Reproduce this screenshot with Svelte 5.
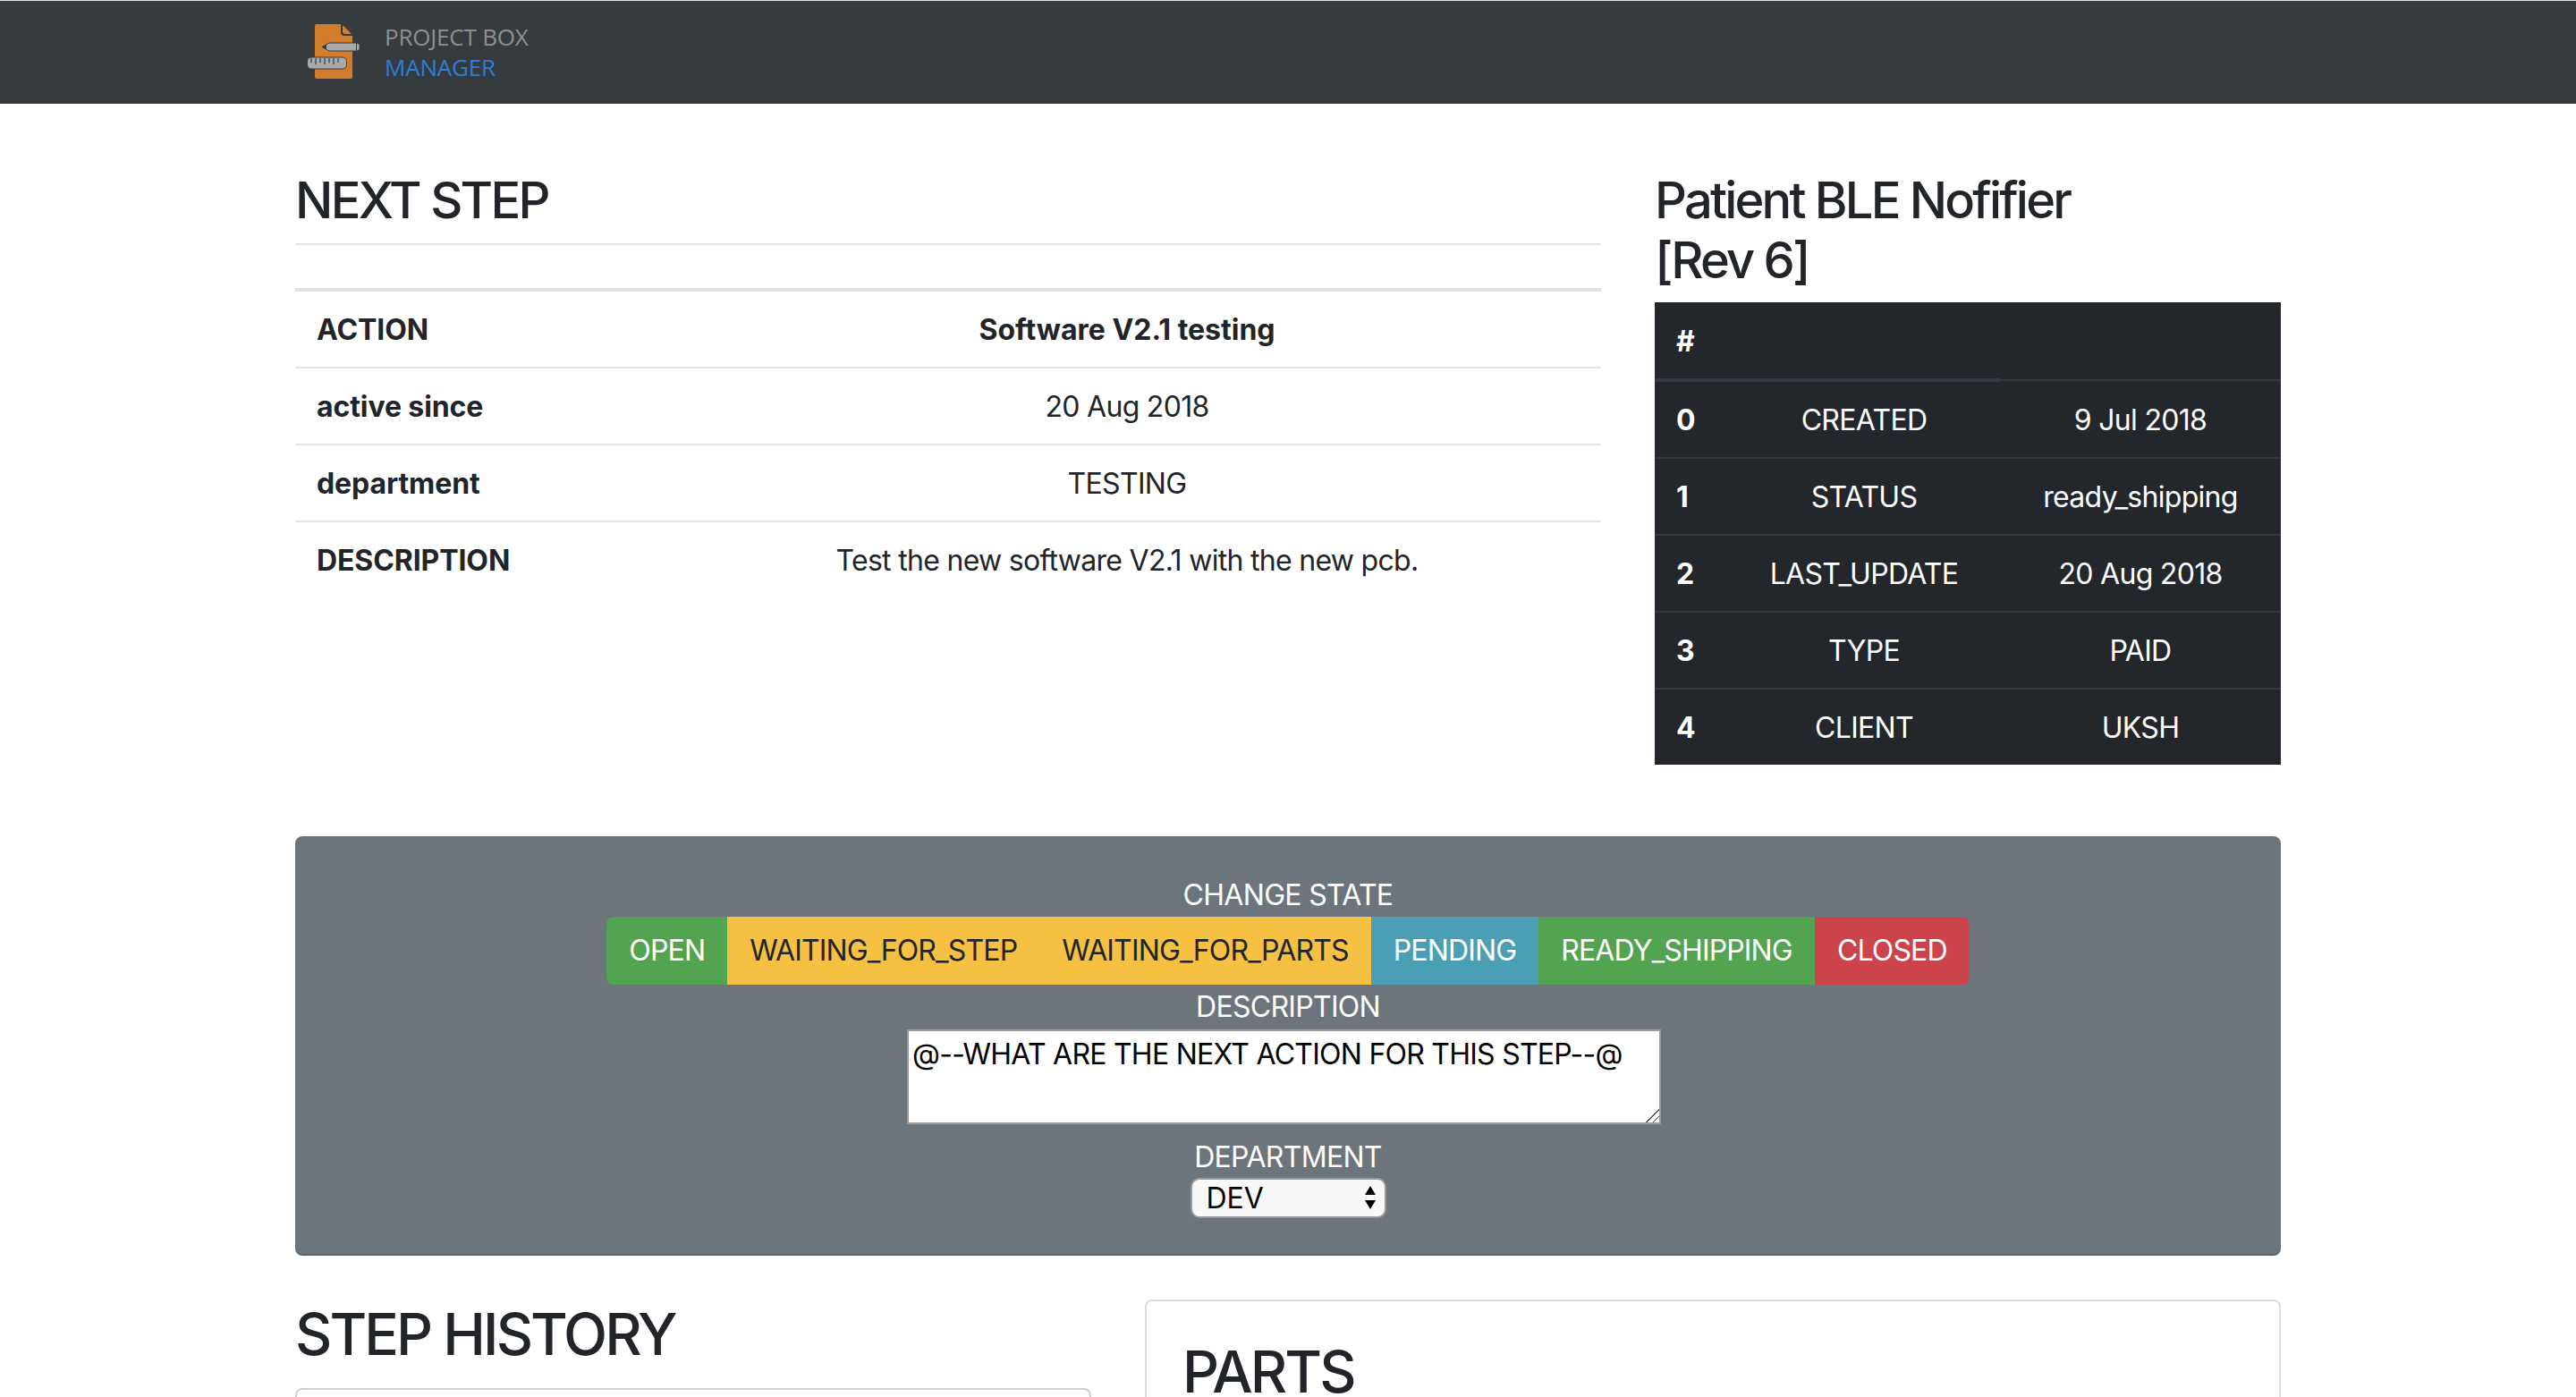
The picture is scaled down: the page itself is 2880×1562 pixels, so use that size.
<script>
    const nextStep = [
        { label: 'ACTION', value: 'Software V2.1 testing', strong: true },
        { label: 'active since', value: '20 Aug 2018' },
        { label: 'department', value: 'TESTING' },
        { label: 'DESCRIPTION', value: 'Test the new software V2.1 with the new pcb.' },
    ];

    const info = [
        ['CREATED', '9 Jul 2018'],
        ['STATUS', 'ready_shipping'],
        ['LAST_UPDATE', '20 Aug 2018'],
        ['TYPE', 'PAID'],
        ['CLIENT', 'UKSH'],
    ];

    const states = [
        { name: 'OPEN', kind: 'success' },
        { name: 'WAITING_FOR_STEP', kind: 'warning' },
        { name: 'WAITING_FOR_PARTS', kind: 'warning' },
        { name: 'PENDING', kind: 'info' },
        { name: 'READY_SHIPPING', kind: 'success' },
        { name: 'CLOSED', kind: 'danger' },
    ];

    const departments = ['DEV', 'TESTING', 'PRODUCTION'];
</script>

<div class="page">
    <nav class="navbar">
        <div class="brand">
            <svg class="logo" viewBox="0 0 60 61" width="60" height="61" aria-hidden="true">
                <path d="M11 0h27v9a4 4 0 0 0 4 4h9v46a2 2 0 0 1-2 2H11a2 2 0 0 1-2-2V2a2 2 0 0 1 2-2z" fill="#d17d2c" />
                <path d="M40 1l10 10h-7a3 3 0 0 1-3-3z" fill="#d17d2c" />
                <path d="M17 25.5l8-4.5h31l3 1.5v6l-3 1.5H25z" fill="#a9a9a9" stroke="#363b40" stroke-width="1" />
                <path d="M17 25.5l5-2.8v5.6z" fill="#363b40" />
                <path d="M55.5 21v9" stroke="#363b40" stroke-width="1" />
                <rect x="0.5" y="37" width="44" height="13" rx="4.5" fill="#a9a9a9" stroke="#363b40" stroke-width="1" />
                <path d="M5 38v5M10 38v7M15 38v5M20 38v7M25 38v5M30 38v7M35 38v5" stroke="#363b40" stroke-width="1.2" />
            </svg>
            <div class="brand-text">
                <span class="brand-top">PROJECT BOX</span>
                <span class="brand-bottom">MANAGER</span>
            </div>
        </div>
    </nav>

    <main class="container">
        <section class="top-row">
            <div>
                <h3>NEXT STEP</h3>
                <hr />
                <table class="table">
                    <tbody>
                        {#each nextStep as row}
                            <tr>
                                <th>{row.label}</th>
                                <td class:strong={row.strong}>{row.value}</td>
                            </tr>
                        {/each}
                    </tbody>
                </table>
            </div>
            <div>
                <h3 class="project-title">Patient BLE Nofifier<br />[Rev 6]</h3>
                <table class="table-dark">
                    <thead>
                        <tr>
                            <th>#</th>
                            <th></th>
                            <th></th>
                        </tr>
                    </thead>
                    <tbody>
                        {#each info as row, i}
                            <tr>
                                <th>{i}</th>
                                <td>{row[0]}</td>
                                <td>{row[1]}</td>
                            </tr>
                        {/each}
                    </tbody>
                </table>
            </div>
        </section>

        <section class="jumbotron">
            <span class="form-label">CHANGE STATE</span>
            <div class="btn-group">
                {#each states as s}
                    <button class="btn {s.kind}">{s.name}</button>
                {/each}
            </div>
            <span class="form-label">DESCRIPTION</span>
            <textarea value="@--WHAT ARE THE NEXT ACTION FOR THIS STEP--@"></textarea>
            <span class="form-label">DEPARTMENT</span>
            <div class="select-wrap">
                <select>
                    {#each departments as d}
                        <option>{d}</option>
                    {/each}
                </select>
                <svg class="arrows" viewBox="0 0 14 28" width="14" height="28" aria-hidden="true">
                    <path d="M7 1l6 10H1zM7 27L1 17h12z" fill="#000" />
                </svg>
            </div>
        </section>

        <section class="bottom-row">
            <div>
                <h2>STEP HISTORY</h2>
                <div class="card history"></div>
            </div>
            <div class="card parts">
                <h2>PARTS</h2>
            </div>
        </section>
    </main>
</div>

<style>
    :global(body) {
        margin: 0;
        background: #fff;
        color: #212529;
        font-family: Inter, "Liberation Sans", sans-serif;
        font-size: 32px;
        letter-spacing: -0.7px;
    }

    .page {
        height: 1562px;
        overflow: hidden;
    }

    .navbar {
        height: 115px;
        background: #363b40;
        border-top: 1px solid #e3e3e3;
    }

    .brand {
        width: 2220px;
        margin: 0 auto;
        display: flex;
        align-items: center;
        gap: 27px;
        height: 100%;
        padding-left: 13px;
        box-sizing: border-box;
    }

    .logo {
        flex: none;
        margin-bottom: 2px;
    }

    .brand-text {
        display: flex;
        flex-direction: column;
        font-family: "Open Sans", sans-serif;
        font-size: 26px;
        line-height: 34px;
        letter-spacing: -0.2px;
        margin-bottom: 2px;
    }

    .brand-top {
        color: #8f8f8f;
    }

    .brand-bottom {
        color: #2f7dd6;
    }

    .container {
        width: 2220px;
        margin: 0 auto;
        padding-top: 73px;
    }

    .top-row {
        display: grid;
        grid-template-columns: 1460px 700px;
        gap: 60px;
        margin-bottom: 80px;
    }

    h3 {
        font-size: 56px;
        font-weight: 500;
        line-height: 67px;
        padding-top: 2px;
        margin: 0 0 14px;
        letter-spacing: -2.7px;
    }

    .project-title {
        margin-bottom: 13px;
        letter-spacing: -2.8px;
    }

    h2 {
        font-size: 64px;
        font-weight: 500;
        line-height: 77px;
        margin: 0;
        letter-spacing: -2.9px;
    }

    hr {
        border: 0;
        border-top: 2px solid #dee2e6;
        margin: 0 0 48px;
    }

    table {
        width: 100%;
        border-collapse: collapse;
        table-layout: fixed;
        line-height: 36px;
    }

    .table {
        border-top: 4px solid #dee2e6;
    }

    .table th {
        width: 400px;
        box-sizing: border-box;
        text-align: left;
        font-weight: 700;
        padding: 25px 24px 23px;
        letter-spacing: -0.1px;
    }

    .table td {
        text-align: center;
        padding: 25px 24px 23px;
    }

    .table td.strong {
        font-weight: 700;
        letter-spacing: 0;
    }

    .table tr + tr > * {
        border-top: 2px solid #dee2e6;
    }

    .table-dark {
        background: #23262b;
        color: #fff;
    }

    .table-dark th,
    .table-dark td {
        padding: 25px 24px 23px;
        text-align: center;
        border-top: 2px solid #32383e;
    }

    .table-dark th:first-child {
        width: 82px;
        box-sizing: border-box;
        text-align: left;
        font-weight: 700;
    }

    .table-dark td:last-child,
    .table-dark th:last-child {
        width: 314px;
        box-sizing: border-box;
    }

    .table-dark thead th {
        border-top: 0;
        height: 36px;
        padding-top: 26px;
        border-bottom: 4px solid #32383e;
    }

    .table-dark thead th:last-child {
        border-bottom-width: 2px;
    }

    .jumbotron {
        height: 469px;
        box-sizing: border-box;
        padding-top: 42px;
        display: flex;
        flex-direction: column;
        align-items: center;
        background: #6d757c;
        border-radius: 8px;
        border-bottom: 2px solid #5c6268;
        color: #fff;
    }

    .form-label {
        line-height: 48px;
    }

    .btn-group {
        display: flex;
        margin-bottom: 1px;
    }

    .btn {
        font: inherit;
        letter-spacing: -0.85px;
        line-height: 48px;
        padding: 14px 25px;
        border: 0;
        color: #fff;
    }

    .btn:first-child {
        border-radius: 8px 0 0 8px;
    }

    .btn:last-child {
        border-radius: 0 8px 8px 0;
    }

    .success {
        background: #53a451;
    }

    .btn.warning {
        background: #f6c042;
        color: #212529;
    }

    .info {
        background: #4a9fb5;
    }

    .danger {
        background: #cc444b;
    }

    textarea {
        display: block;
        width: 843px;
        height: 106px;
        box-sizing: border-box;
        margin: 1px 9px 13px 0;
        padding: 7px 4px 1px;
        border: 2px solid #9a9a9a;
        background: #fff;
        color: #000;
        font: inherit;
        letter-spacing: -0.75px;
        line-height: 38px;
        outline: 0;
    }

    textarea::-webkit-resizer {
        background: linear-gradient(135deg, transparent 50%, #555 50%, #555 56%, transparent 56%, transparent 74%, #555 74%, #555 80%, transparent 80%);
    }

    .select-wrap {
        position: relative;
        width: 219px;
        height: 45px;
        margin-top: -1px;
    }

    select {
        appearance: none;
        width: 100%;
        height: 100%;
        box-sizing: border-box;
        padding: 0 16px;
        border: 2px solid #9a9a9a;
        border-radius: 10px;
        background: #f8f8f8;
        color: #000;
        font: inherit;
        line-height: 41px;
    }

    .arrows {
        position: absolute;
        right: 11px;
        top: 8px;
        pointer-events: none;
    }

    .bottom-row {
        display: grid;
        grid-template-columns: 890px 1270px;
        gap: 60px;
        margin-top: 49px;
    }

    .card {
        border: 2px solid #dcdcdc;
        border-radius: 8px;
    }

    .history {
        margin-top: 22px;
        height: 400px;
        border-color: #cfcfcf;
    }

    .parts {
        padding: 40px;
        height: 400px;
    }
</style>
